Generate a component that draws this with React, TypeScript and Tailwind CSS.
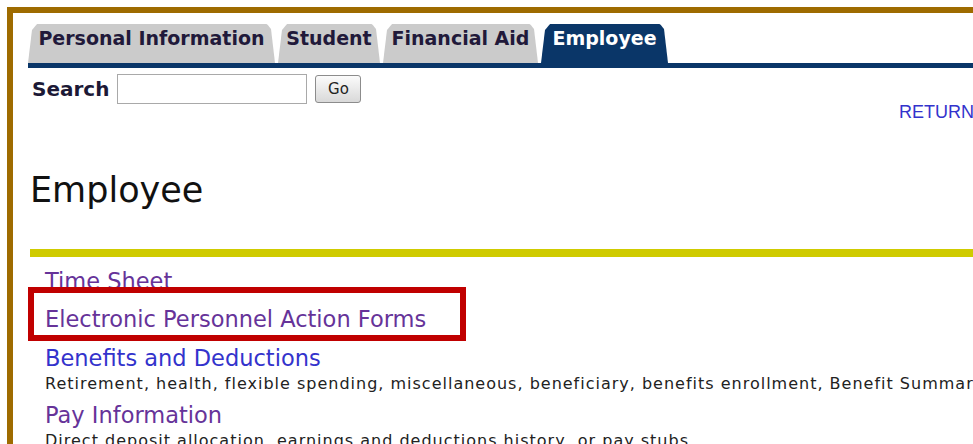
import React from "react";

type Tab = { label: string; width: string; active?: boolean };

const TABS: Tab[] = [
  { label: "Personal Information", width: "w-[247px]" },
  { label: "Student", width: "w-[102px]" },
  { label: "Financial Aid", width: "w-[155px]" },
  { label: "Employee", width: "w-[127px]", active: true },
];

function TabBar() {
  return (
    <div>
      <div className="flex items-end gap-[3px]">
        {TABS.map((tab) => (
          <div
            key={tab.label}
            className={`${tab.width} h-[39px] pt-[3px] text-center text-[19px] leading-[22px] font-bold rounded-tl-[9px] rounded-tr-[9px] [clip-path:polygon(0_100%,4px_6px,9px_0,calc(100%-8px)_0,calc(100%-4px)_5px,100%_100%)] ${
              tab.active ? "bg-[#0a3668] text-white" : "bg-[#cbcbcb] text-[#21193a]"
            }`}
          >
            {tab.label}
          </div>
        ))}
      </div>
      <div className="h-[5px] bg-[#0a3668]" />
    </div>
  );
}

function SearchRow() {
  return (
    <div className="mt-[6px] pl-[4px] flex items-center h-[30px]">
      <span className="text-[20px] leading-[22px] font-bold text-[#1c1936]">Search</span>
      <input
        type="text"
        aria-label="Search"
        className="ml-[8px] w-[190px] h-[30px] border border-[#a9a9a9] bg-white outline-none"
      />
      <button className="ml-[8px] w-[46px] h-[28px] rounded-[3px] border border-[#8c8c8c] bg-gradient-to-b from-[#fbfbfb] to-[#d9d9d9] text-[15px] text-[#222] leading-none">
        Go
      </button>
    </div>
  );
}

type Item = { title: string; visited?: boolean; desc?: string; gap: string };

const ITEMS: Item[] = [
  { title: "Time Sheet", visited: true, gap: "mt-[11px]" },
  { title: "Electronic Personnel Action Forms", visited: true, gap: "mt-[10px]" },
  {
    title: "Benefits and Deductions",
    desc: "Retirement, health, flexible spending, miscellaneous, beneficiary, benefits enrollment, Benefit Summary",
    gap: "mt-[11px]",
  },
  {
    title: "Pay Information",
    visited: true,
    desc: "Direct deposit allocation, earnings and deductions history, or pay stubs.",
    gap: "mt-[9px]",
  },
];

export default function App() {
  return (
    <div className="relative w-[973px] h-[444px] overflow-hidden bg-white [font-family:'DejaVu_Sans',Verdana,sans-serif]">
      <div className="mt-[7px] ml-[7px] w-[1200px] h-[600px] border-t-[6px] border-l-[6px] border-[#9e6b00] pt-[11px] pl-[15px]">
        <TabBar />
        <SearchRow />

        <div className="-mt-[2px] pl-[871px] h-[20px] text-[18px] leading-[20px] text-[#3333cc] [font-family:'Liberation_Sans',Arial,sans-serif]">
          RETURN TO MENU
        </div>

        <h1 className="mt-[48px] pl-[2px] text-[35px] leading-[41px] font-normal text-[#111]">Employee</h1>

        <div className="mt-[38px] ml-[2px] h-[8px] bg-[#cfcb00]" />

        <div className="pl-[17px]">
          {ITEMS.map((item) => (
            <div key={item.title} className={item.gap}>
              <div className="relative">
                <a
                  href="#"
                  className={`text-[22.5px] leading-[26px] ${item.visited ? "text-[#663399]" : "text-[#3333cc]"}`}
                >
                  {item.title}
                </a>
                {item.title === "Electronic Personnel Action Forms" && (
                  <div className="absolute -left-[17px] -top-[19px] w-[438px] h-[54px] border-[6px] border-[#c00000]" />
                )}
              </div>
              {item.desc && (
                <div className="mt-[1px] text-[16px] leading-[19px] tracking-[1px] text-[#222] whitespace-nowrap">
                  {item.desc}
                </div>
              )}
            </div>
          ))}
        </div>
      </div>
    </div>
  );
}
